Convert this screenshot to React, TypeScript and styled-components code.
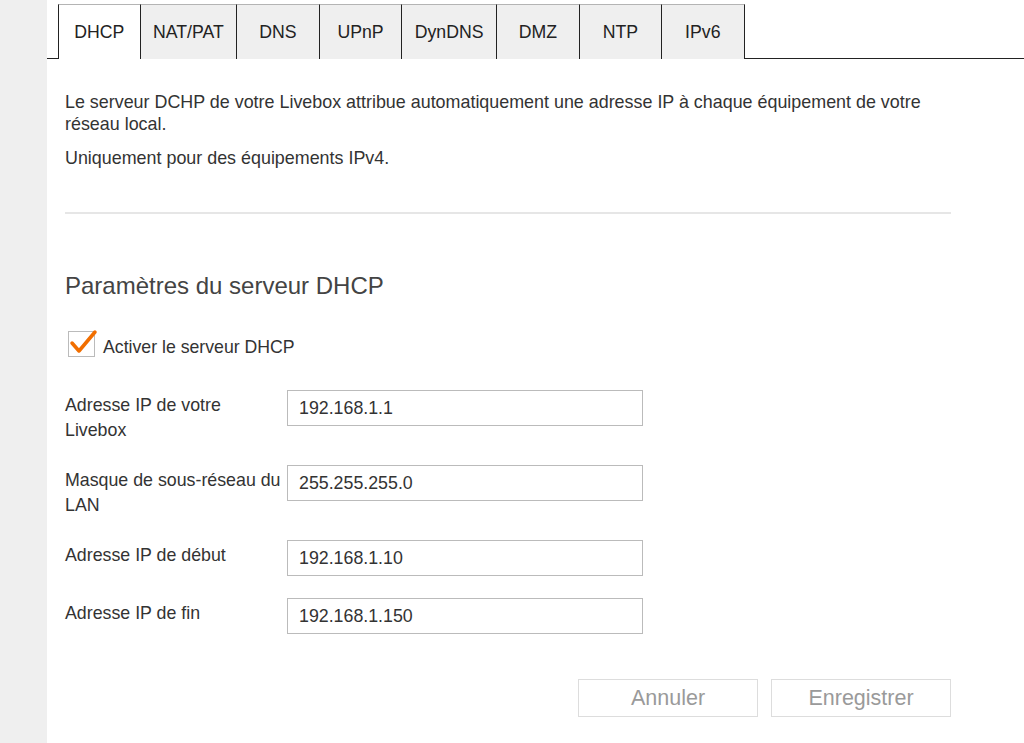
import React from 'react';
import styled, { createGlobalStyle } from 'styled-components';

const GlobalStyle = createGlobalStyle`
  html, body {
    margin: 0;
    padding: 0;
    background: #fff;
  }
  body {
    font-family: "Liberation Sans", Arial, sans-serif;
    color: #333;
  }
`;

const Page = styled.div`
  display: flex;
  min-height: 743px;
`;

const Sidebar = styled.div`
  width: 47px;
  flex-shrink: 0;
  background: #efefef;
`;

const Main = styled.div`
  flex: 1;
  display: flex;
  flex-direction: column;
`;

const TabBar = styled.div`
  display: flex;
  align-items: stretch;
  padding-top: 4px;
  height: 59px;
  box-sizing: border-box;
`;

const TabGap = styled.div<{ grow?: boolean }>`
  width: ${({ grow }) => (grow ? 'auto' : '11px')};
  flex: ${({ grow }) => (grow ? 1 : 'none')};
  border-bottom: 1px solid #222;
`;

const Tab = styled.div<{ active?: boolean; first?: boolean }>`
  box-sizing: border-box;
  min-width: 82.5px;
  padding: 0 12.5px;
  display: flex;
  align-items: center;
  justify-content: center;
  font-size: 17.7px;
  color: #222;
  background: ${({ active }) => (active ? '#fff' : '#efefef')};
  border-top: 1px solid #b4b4b4;
  border-right: 1px solid #222;
  border-left: ${({ first }) => (first ? '1px solid #222' : 'none')};
  cursor: pointer;
`;

const Content = styled.div`
  width: 886px;
  padding: 32px 0 0 18px;
`;

const Text = styled.p<{ gap?: number }>`
  margin: 0 0 ${({ gap }) => gap ?? 0}px;
  font-size: 17.9px;
  line-height: 22px;
  color: #333;
`;

const Divider = styled.hr`
  margin: 43px 0 0;
  border: none;
  border-top: 2px solid #e6e6e6;
`;

const Heading = styled.h2`
  margin: 58px 0 0;
  font-size: 24px;
  line-height: 28px;
  font-weight: normal;
  color: #444;
`;

const CheckRow = styled.label`
  margin-top: 31px;
  display: flex;
  align-items: center;
  gap: 8px;
  padding-left: 3px;
  font-size: 17.7px;
  color: #333;

  span.caption {
    padding-top: 2px;
  }
`;

const Box = styled.span`
  width: 25px;
  height: 24px;
  border: 1px solid #bbb;
  position: relative;
  flex-shrink: 0;
  margin-bottom: 4px;

  svg {
    position: absolute;
    left: 1px;
    top: -2px;
    overflow: visible;
  }
`;

const Form = styled.div`
  margin-top: 29px;
  display: flex;
  flex-direction: column;
  gap: 22px;
`;

const Row = styled.div`
  display: grid;
  grid-template-columns: 222px 356px;
  align-items: start;
`;

const Label = styled.div`
  max-width: 218px;
  font-size: 17.8px;
  line-height: 25px;
  padding-top: 3px;
  color: #333;
`;

const Input = styled.input`
  box-sizing: border-box;
  width: 356px;
  height: 36px;
  border: 1px solid #bbb;
  padding: 0 11px;
  font-family: inherit;
  font-size: 17.8px;
  color: #333;
  outline: none;
`;

const Actions = styled.div`
  margin-top: 45px;
  display: flex;
  justify-content: flex-end;
  gap: 13px;
`;

const Button = styled.button`
  width: 180px;
  height: 38px;
  background: #fff;
  border: 1px solid #ddd;
  font-family: inherit;
  font-size: 21.5px;
  color: #9a9a9a;
`;

const tabs = ['DHCP', 'NAT/PAT', 'DNS', 'UPnP', 'DynDNS', 'DMZ', 'NTP', 'IPv6'];

const fields = [
  { label: 'Adresse IP de votre Livebox', value: '192.168.1.1' },
  { label: 'Masque de sous-réseau du LAN', value: '255.255.255.0' },
  { label: 'Adresse IP de début', value: '192.168.1.10' },
  { label: 'Adresse IP de fin', value: '192.168.1.150' },
];

const App = () => (
  <>
    <GlobalStyle />
    <Page>
      <Sidebar />
      <Main>
        <TabBar>
          <TabGap />
          {tabs.map((t, i) => (
            <Tab key={t} active={i === 0} first={i === 0}>
              {t}
            </Tab>
          ))}
          <TabGap grow />
        </TabBar>
        <Content>
          <Text gap={12}>
            Le serveur DCHP de votre Livebox attribue automatiquement une adresse IP à chaque
            équipement de votre réseau local.
          </Text>
          <Text>Uniquement pour des équipements IPv4.</Text>
          <Divider />
          <Heading>Paramètres du serveur DHCP</Heading>
          <CheckRow>
            <Box>
              <svg width="24" height="24" viewBox="0 0 24 24">
                <polyline
                  points="2,13 9,21 25,2"
                  fill="none"
                  stroke="#f16e00"
                  strokeWidth="3.5"
                  strokeLinecap="round"
                  strokeLinejoin="round"
                />
              </svg>
            </Box>
            <span className="caption">Activer le serveur DHCP</span>
          </CheckRow>
          <Form>
            {fields.map((f) => (
              <Row key={f.label}>
                <Label>{f.label}</Label>
                <Input defaultValue={f.value} />
              </Row>
            ))}
          </Form>
          <Actions>
            <Button>Annuler</Button>
            <Button>Enregistrer</Button>
          </Actions>
        </Content>
      </Main>
    </Page>
  </>
);

export default App;
